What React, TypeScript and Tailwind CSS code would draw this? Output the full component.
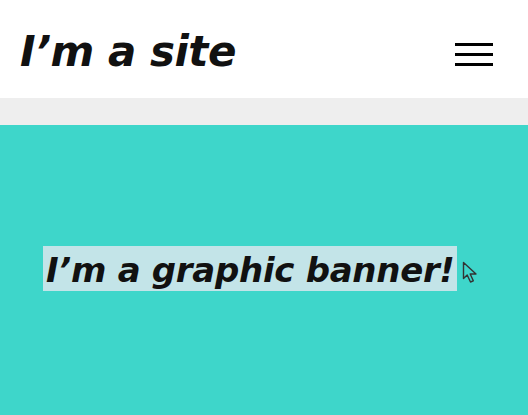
export default function App() {
  return (
    <div className="w-[528px] h-[415px] overflow-hidden bg-[#3ed6ca]" style={{ fontFamily: '"DejaVu Sans", sans-serif' }}>
      <header className="h-[98px] bg-white flex items-center justify-between pl-[20px] pr-[35px]">
        <h1 className="text-[42px] font-bold italic text-[#111] tracking-[-0.5px] leading-none mt-[5px]">I’m a site</h1>
        <div className="flex flex-col gap-[7px] mt-[10px]">
          <span className="block w-[38px] h-[3px] bg-black" />
          <span className="block w-[38px] h-[3px] bg-black" />
          <span className="block w-[38px] h-[3px] bg-black" />
        </div>
      </header>
      <div className="h-[27px] bg-[#eeeeee]" />
      <section className="h-[290px] flex items-center pl-[43px] pb-[3px]">
        <div className="bg-[#c3e4e8] h-[45px] w-[414px] shrink-0 flex items-center pl-[3px]">
          <span className="text-[34px] font-bold italic text-[#111] leading-none tracking-[-0.3px] whitespace-nowrap mt-[2px]">I’m a graphic banner!</span>
        </div>
        <svg width="16" height="23" viewBox="0 0 16 23" className="ml-[5px] mt-[8px] shrink-0">
          <path d="M1.5 1.5 L1.5 17.5 L5.2 14 L8.5 21 L11.3 19.8 L8.2 13 L14 13 Z" fill="none" stroke="#333" strokeWidth="1.4" strokeLinejoin="round" />
        </svg>
      </section>
    </div>
  )
}
